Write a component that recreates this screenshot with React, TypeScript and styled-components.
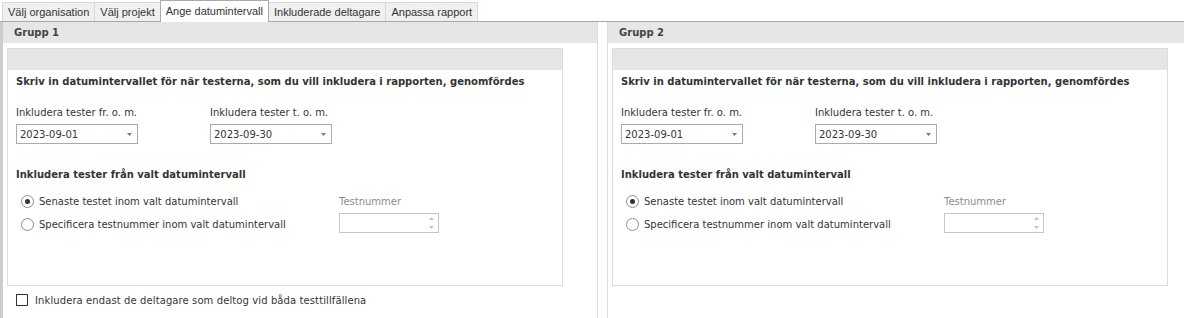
import React from "react";
import styled, { createGlobalStyle } from "styled-components";

const GlobalStyle = createGlobalStyle`
  html, body {
    margin: 0;
    padding: 0;
    background: #fff;
  }
  body {
    font-family: "DejaVu Sans", Verdana, sans-serif;
    font-size: 10px;
    color: #353535;
  }
  * {
    box-sizing: border-box;
  }
`;

const Window = styled.div`
  width: 1184px;
  height: 318px;
  overflow: hidden;
  display: flex;
  flex-direction: column;
`;

const TabStrip = styled.div`
  display: flex;
  align-items: flex-end;
  height: 21px;
  padding-left: 2px;
`;

const Tab = styled.div<{ $active?: boolean }>`
  position: relative;
  z-index: ${({ $active }) => ($active ? 2 : 1)};
  display: flex;
  align-items: center;
  height: ${({ $active }) => ($active ? "22px" : "19px")};
  margin-bottom: ${({ $active }) => ($active ? "-1px" : "0")};
  margin-left: -1px;
  padding: 0 5px 1px;
  font-family: "Liberation Sans", Arial, sans-serif;
  font-size: 11px;
  color: #333;
  background: ${({ $active }) => ($active ? "#fff" : "#f0f0f0")};
  border: 1px solid ${({ $active }) => ($active ? "#ababab" : "#d9d9d9")};
  border-bottom: none;

  &:first-child {
    margin-left: 0;
  }
`;

const Panel = styled.div`
  flex: 1;
  display: flex;
  border-top: 1px solid #a9a9a9;
`;

const Group = styled.section<{ $first?: boolean }>`
  display: flex;
  flex-direction: column;
  ${({ $first }) =>
    $first
      ? `
    width: 598px;
    margin-right: 9px;
    border-left: 3px solid #cccccc;
    border-right: 1px solid #dcdcdc;
  `
      : `
    flex: 1;
    border-left: 1px solid #dcdcdc;
  `}
`;

const GroupHeader = styled.div`
  height: 21px;
  display: flex;
  align-items: center;
  padding-left: 11px;
  background: #e6e6e6;
  font-weight: bold;
  color: #444;
`;

const GroupBody = styled.div`
  padding: 5px 0 0 4px;
`;

const Box = styled.div`
  width: 556px;
  height: 238px;
  display: flex;
  flex-direction: column;
  border: 1px solid #dcdcdc;
`;

const BoxHeader = styled.div`
  height: 21px;
  background: #e6e6e6;
`;

const BoxBody = styled.div`
  padding: 5px 0 0 8px;
  display: flex;
  flex-direction: column;
`;

const Heading = styled.div<{ $gap: number }>`
  margin-top: ${({ $gap }) => $gap}px;
  font-weight: bold;
  line-height: 14px;
  color: #333;
`;

const FieldRow = styled.div`
  display: flex;
  margin-top: 17px;
`;

const Field = styled.div`
  width: 194px;
  display: flex;
  flex-direction: column;
`;

const Label = styled.div<{ $muted?: boolean }>`
  line-height: ${({ $muted }) => ($muted ? "23px" : "14px")};
  color: ${({ $muted }) => ($muted ? "#8c8c8c" : "#353535")};
`;

const Combo = styled.div`
  width: 122px;
  height: 20px;
  margin-top: 4px;
  display: flex;
  align-items: center;
  justify-content: space-between;
  padding: 0 5px 0 3px;
  border: 1px solid #ababab;
  background: #fff;
`;

const OptionRow = styled.div`
  display: flex;
  margin-top: 8px;
`;

const RadioList = styled.div`
  width: 323px;
  display: flex;
  flex-direction: column;
`;

const RadioRow = styled.label`
  height: 23px;
  display: flex;
  align-items: center;
  gap: 5px;
  padding-left: 5px;
`;

const RadioCircle = styled.span<{ $checked?: boolean }>`
  width: 13px;
  height: 13px;
  border-radius: 50%;
  border: 1px solid #8e8e8e;
  display: flex;
  align-items: center;
  justify-content: center;
  background: #fff;

  &::after {
    content: "";
    width: 5px;
    height: 5px;
    border-radius: 50%;
    background: ${({ $checked }) => ($checked ? "#333" : "transparent")};
  }
`;

const SpinColumn = styled.div`
  display: flex;
  flex-direction: column;
`;

const SpinBox = styled.div`
  width: 100px;
  height: 20px;
  display: flex;
  justify-content: flex-end;
  align-items: center;
  padding-right: 4px;
  border: 1px solid #c6c6c6;
`;

const SpinArrows = styled.div`
  display: flex;
  flex-direction: column;
  gap: 6px;
`;

const CheckRow = styled.label`
  display: flex;
  align-items: center;
  gap: 7px;
  margin: 8px 0 0 9px;
  letter-spacing: 0.1px;
`;

const CheckBox = styled.span`
  width: 12px;
  height: 12px;
  border: 1px solid #333;
  background: #fff;
`;

const Arrow = ({ up, color }: { up?: boolean; color: string }) => (
  <svg width="5" height="3" viewBox="0 0 5 3">
    <polygon points={up ? "0,3 5,3 2.5,0" : "0,0 5,0 2.5,3"} fill={color} />
  </svg>
);

const DateCombo = ({ value }: { value: string }) => (
  <Combo>
    <span>{value}</span>
    <Arrow color="#7a7a7a" />
  </Combo>
);

const GroupPanel = ({ title, first }: { title: string; first?: boolean }) => (
  <Group $first={first}>
    <GroupHeader>{title}</GroupHeader>
    <GroupBody>
      <Box>
        <BoxHeader />
        <BoxBody>
          <Heading $gap={0}>
            Skriv in datumintervallet för när testerna, som du vill inkludera i
            rapporten, genomfördes
          </Heading>
          <FieldRow>
            <Field>
              <Label>Inkludera tester fr. o. m.</Label>
              <DateCombo value="2023-09-01" />
            </Field>
            <Field>
              <Label>Inkludera tester t. o. m.</Label>
              <DateCombo value="2023-09-30" />
            </Field>
          </FieldRow>
          <Heading $gap={24}>Inkludera tester från valt datumintervall</Heading>
          <OptionRow>
            <RadioList>
              <RadioRow>
                <RadioCircle $checked />
                Senaste testet inom valt datumintervall
              </RadioRow>
              <RadioRow>
                <RadioCircle />
                Specificera testnummer inom valt datumintervall
              </RadioRow>
            </RadioList>
            <SpinColumn>
              <Label $muted>Testnummer</Label>
              <SpinBox>
                <SpinArrows>
                  <Arrow up color="#c4c4c4" />
                  <Arrow color="#c4c4c4" />
                </SpinArrows>
              </SpinBox>
            </SpinColumn>
          </OptionRow>
        </BoxBody>
      </Box>
      {first && (
        <CheckRow>
          <CheckBox />
          Inkludera endast de deltagare som deltog vid båda testtillfällena
        </CheckRow>
      )}
    </GroupBody>
  </Group>
);

const tabs = [
  "Välj organisation",
  "Välj projekt",
  "Ange datumintervall",
  "Inkluderade deltagare",
  "Anpassa rapport",
];

export default function App() {
  return (
    <>
      <GlobalStyle />
      <Window>
        <TabStrip>
          {tabs.map((t) => (
            <Tab key={t} $active={t === "Ange datumintervall"}>
              {t}
            </Tab>
          ))}
        </TabStrip>
        <Panel>
          <GroupPanel title="Grupp 1" first />
          <GroupPanel title="Grupp 2" />
        </Panel>
      </Window>
    </>
  );
}
